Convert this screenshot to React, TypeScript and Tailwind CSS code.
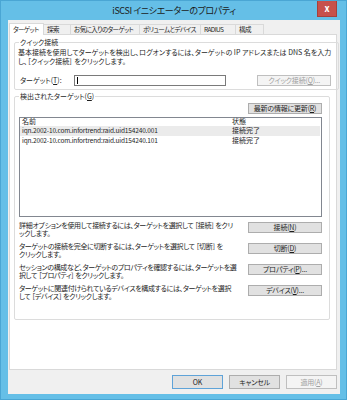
import React from 'react'

const tabs = [
    { label: 'ターゲット', w: 'w-[35px]', active: true },
    { label: '探索', w: 'w-[28px]' },
    { label: 'お気に入りのターゲット', w: 'w-[70px]' },
    { label: 'ボリュームとデバイス', w: 'w-[62px]' },
    { label: 'RADIUS', w: 'w-[36px]' },
    { label: '構成', w: 'w-[29px]' },
]

const targets = [
    { name: 'iqn.2002-10.com.infortrend:raid.uid154240.001', status: '接続完了', selected: true },
    { name: 'iqn.2002-10.com.infortrend:raid.uid154240.101', status: '接続完了' },
]

const actions = [
    {
        lines: ['詳細オプションを使用して接続するには、ターゲットを選択して ［接続］ をクリ', 'ックします。'],
        label: '接続(', key: 'N', tail: ')',
    },
    {
        lines: ['ターゲットの接続を完全に切断するには、ターゲットを選択して ［切断］ を', 'クリックします。'],
        label: '切断(', key: 'D', tail: ')',
    },
    {
        lines: ['セッションの構成など、ターゲットのプロパティを確認するには、ターゲットを選', '択して ［プロパティ］ をクリックします。'],
        label: 'プロパティ(', key: 'P', tail: ')...',
    },
    {
        lines: ['ターゲットに関連付けられているデバイスを構成するには、ターゲットを選択', 'して ［デバイス］ をクリックします。'],
        label: 'デバイス(', key: 'V', tail: ')...',
    },
]

function Button({ children, disabled, width = 'w-[74px]', height = 'h-[11px]', primary }: {
    children: React.ReactNode
    disabled?: boolean
    width?: string
    height?: string
    primary?: boolean
}) {
    return (
        <button
            className={`${width} ${height} shrink-0 flex items-center justify-center border text-[7px] tracking-[-0.2px] leading-none whitespace-nowrap ${disabled
                ? 'bg-[#f4f4f4] border-[#bfbfbf] text-[#a0a0a0]'
                : primary
                    ? 'bg-[#e1e1e1] border-[#5fa3d8] text-[#1e1e1e]'
                    : 'bg-[#e1e1e1] border-[#adadad] text-[#1e1e1e]'
                }`}
        >
            {children}
        </button>
    )
}

export default function App() {
    return (
        <div className="w-[347px] h-[400px] bg-[#65bfe7] border border-[#4aa6d4] pl-[7px] pr-[6px] pb-[5px] flex flex-col font-['Noto_Sans_CJK_JP',sans-serif] [font-feature-settings:'palt'] text-[#1e1e1e] overflow-hidden">
            {/* TITLE BAR */}
            <div className="relative h-[19px] shrink-0 flex items-center justify-center text-[9px] tracking-[-0.4px] text-[#1a1a1a]">
                <span className="mt-[1px]">iSCSI イニシエーターのプロパティ</span>
                <div className="absolute -top-px right-[3px] w-[20px] h-[17px] bg-[#c7514b] border border-[#a8403b] border-t-0 flex items-center justify-center text-white text-[9px] tracking-normal font-bold leading-none">
                    x
                </div>
            </div>

            {/* CLIENT */}
            <div className="flex-1 bg-[#f0f0f0] pl-[1px] pr-[3px] flex flex-col">
                {/* Tabs */}
                <div className="h-[14px] flex items-end text-[6.5px] tracking-[-0.6px] leading-none">
                    {tabs.map(tab => (
                        <div
                            key={tab.label}
                            className={`${tab.w} shrink-0 flex items-center pl-[3px] border border-b-0 border-[#d9d9d9] whitespace-nowrap ${tab.active
                                ? 'h-[12px] bg-white relative z-10 -mb-px pb-[1px]'
                                : 'h-[10px] bg-[#f0f0f0] -ml-px'
                                }`}
                        >
                            {tab.label}
                        </div>
                    ))}
                </div>

                {/* Panel */}
                <div className="h-[336px] shrink-0 bg-white border border-[#d9d9d9] pl-[4px] pr-[6px] pt-[3px] text-[7px] leading-[8.5px]">
                    {/* Quick connect */}
                    <fieldset className="border border-[#dcdcdc] rounded-[2px] pl-[3px] pr-[7px] pb-[3px]">
                        <legend className="ml-[1px] px-[1px] leading-[9px]">クイック接続</legend>
                        <div className="mt-[1px] whitespace-nowrap">
                            <div>基本接続を使用してターゲットを検出し、ログオンするには、ターゲットの IP アドレスまたは DNS 名を入力</div>
                            <div>し、［クイック接続］ をクリックします。</div>
                        </div>
                        <div className="mt-[9px] flex items-center">
                            <span className="w-[56px] pl-[2px] shrink-0">ターゲット(<u>T</u>):</span>
                            <div className="w-[152px] h-[11px] border border-[#7a7a7a] bg-white flex items-center pl-[2px]">
                                <div className="w-px h-[7px] bg-black" />
                            </div>
                            <div className="ml-auto mt-[1px]">
                                <Button disabled>クイック接続(<u>Q</u>)...</Button>
                            </div>
                        </div>
                    </fieldset>

                    {/* Discovered targets */}
                    <fieldset className="mt-[2px] border border-[#dcdcdc] rounded-[2px] pl-[4px] pr-[7px] pb-[18px]">
                        <legend className="px-[1px] leading-[9px]">検出されたターゲット(<u>G</u>)</legend>
                        <div className="mt-[1.5px] flex justify-end">
                            <Button>最新の情報に更新(<u>R</u>)</Button>
                        </div>

                        <div className="mt-[3px] h-[100px] border border-[#828790] bg-white">
                            <div className="h-[8px] flex items-center pl-[2px] leading-none">
                                <span className="w-[210px]">名前</span>
                                <span>状態</span>
                            </div>
                            {targets.map(t => (
                                <div
                                    key={t.name}
                                    className={`h-[10px] flex items-center pl-[2px] leading-none mr-[1px] ${t.selected ? 'bg-[#ebebeb]' : ''}`}
                                >
                                    <span className="w-[210px] whitespace-nowrap text-[6.5px] tracking-[-0.15px]">{t.name}</span>
                                    <span>{t.status}</span>
                                </div>
                            ))}
                        </div>

                        <div className="mt-[4px] flex flex-col gap-[4px]">
                            {actions.map(a => (
                                <div key={a.key} className="h-[17px] flex items-start">
                                    <div className="whitespace-nowrap tracking-[-0.35px]">
                                        <div>{a.lines[0]}</div>
                                        <div>{a.lines[1]}</div>
                                    </div>
                                    <div className="ml-auto mt-[1px]">
                                        <Button>{a.label}<u>{a.key}</u>{a.tail}</Button>
                                    </div>
                                </div>
                            ))}
                        </div>
                    </fieldset>
                </div>

                {/* Dialog buttons */}
                <div className="mt-[5px] flex justify-end gap-[6px]">
                    <Button primary width="w-[51px]" height="h-[14px]">OK</Button>
                    <Button width="w-[51px]" height="h-[14px]">キャンセル</Button>
                    <Button disabled width="w-[51px]" height="h-[14px]">適用(<u>A</u>)</Button>
                </div>
            </div>
        </div>
    )
}
